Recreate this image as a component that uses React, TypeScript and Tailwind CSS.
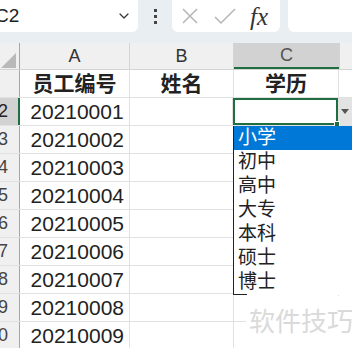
import { ChevronDown } from "lucide-react";

const ids = ["20210001", "20210002", "20210003", "20210004", "20210005", "20210006", "20210007", "20210008", "20210009"];
const options = ["小学", "初中", "高中", "大专", "本科", "硕士", "博士"];

const App = () => {
  return (
    <div
      className="relative w-[352px] h-[348px] overflow-hidden bg-white text-[#222]"
      style={{ fontFamily: '"Liberation Sans", "Noto Sans CJK SC", sans-serif' }}
    >
      {/* Formula bar */}
      <div className="h-[43px] bg-[#e9eef3] flex items-start">
        <div className="w-[138px] h-[32px] bg-white rounded-br-[6px] flex items-center justify-between pr-[6px]">
          <span className="-ml-[5px] text-[19px] text-[#222]">C2</span>
          <ChevronDown className="w-[16px] h-[16px] text-[#333]" strokeWidth={1.8} />
        </div>
        <div className="w-[34px] h-[32px] flex flex-col items-center justify-center gap-[3px]">
          <span className="w-[3px] h-[3px] bg-[#444]" />
          <span className="w-[3px] h-[3px] bg-[#444]" />
          <span className="w-[3px] h-[3px] bg-[#444]" />
        </div>
        <div className="w-[108px] h-[32px] bg-white rounded-b-[6px] flex items-center px-[8px] gap-[13px]">
          <svg width="20" height="20" viewBox="0 0 20 20" className="text-[#b5b5b5]">
            <path d="M3 3 L17 17 M17 3 L3 17" stroke="currentColor" strokeWidth="1.5" fill="none" />
          </svg>
          <svg width="24" height="20" viewBox="0 0 24 20" className="text-[#b5b5b5]">
            <path d="M2 11 L8 17 L22 3" stroke="currentColor" strokeWidth="1.5" fill="none" />
          </svg>
          <span className="text-[25px] leading-none italic text-[#333]" style={{ fontFamily: '"Liberation Serif", serif' }}>
            fx
          </span>
        </div>
        <div className="ml-[8px] flex-1 h-[32px] bg-white rounded-bl-[6px]" />
      </div>

      {/* Column header row */}
      <div className="flex h-[27px] bg-[#f0f0f0] border-b border-[#d4d4d4] text-[18px] text-[#333]">
        <div className="w-[20px] h-full border-r border-[#a8a8a8] flex items-end">
          <svg width="19" height="22" viewBox="0 0 19 22">
            <path d="M1 21 L16 21 L16 6 Z" fill="#b9b9b9" />
          </svg>
        </div>
        <div className="w-[110px] h-full border-r border-[#d4d4d4] flex items-center justify-center">A</div>
        <div className="w-[104px] h-full border-r border-[#d4d4d4] flex items-center justify-center">B</div>
        <div className="w-[105px] h-full bg-[#d2d2d2] border-b-2 border-[#1e6e42] flex items-center justify-center text-[#555]">C</div>
        <div className="flex-1 h-full border-l border-[#d4d4d4]" />
      </div>

      {/* Header data row */}
      <div className="flex h-[28px] border-b border-[#e1e1e1]">
        <div className="w-[20px] h-full bg-[#f0f0f0] border-r border-[#a8a8a8]" />
        <div className="w-[110px] h-full border-r border-[#e1e1e1] flex items-center justify-center text-[21px] font-bold">员工编号</div>
        <div className="w-[104px] h-full border-r border-[#e1e1e1] flex items-center justify-center text-[21px] font-bold">姓名</div>
        <div className="w-[105px] h-full border-r border-[#e1e1e1] flex items-center justify-center text-[21px] font-bold">学历</div>
        <div className="flex-1 h-full" />
      </div>

      {/* Data rows */}
      {ids.map((id, i) => {
        const selected = i === 0;
        return (
          <div key={id} className="flex h-[28px] border-b border-[#e1e1e1]">
            <div
              className={
                selected
                  ? "w-[20px] h-full bg-[#d2d2d2] border-r-2 border-[#1e6e42] flex items-center justify-end pr-[10px] text-[18px] text-[#222]"
                  : "w-[20px] h-full bg-[#f0f0f0] border-r border-[#a8a8a8] flex items-center justify-end pr-[11px] text-[18px] text-[#444]"
              }
            >
              {i + 2}
            </div>
            <div className="w-[110px] h-full border-r border-[#e1e1e1] flex items-center justify-end pr-[5px] text-[21px]">{id}</div>
            <div className="w-[104px] h-full border-r border-[#e1e1e1]" />
            <div className={selected ? "relative w-[105px] h-full border-2 border-[#1e6e42]" : "w-[105px] h-full border-r border-[#e1e1e1]"}>
              {selected && <span className="absolute -right-[4px] -bottom-[4px] w-[6px] h-[6px] bg-[#1e6e42] border border-white" />}
            </div>
            <div className="flex-1 h-full">
              {selected && (
                <div className="h-full w-[14px] bg-[#e3e3e3] flex items-center justify-center">
                  <span className="w-0 h-0 border-l-[4px] border-r-[4px] border-t-[5px] border-l-transparent border-r-transparent border-t-[#555]" />
                </div>
              )}
            </div>
          </div>
        );
      })}

      {/* Validation list */}
      <div className="absolute left-[233px] top-[126px] w-[130px] h-[169px] bg-white border-l border-[#222]">
        {options.map((o, i) => (
          <div
            key={o}
            className={
              i === 0
                ? "h-[24px] bg-[#0078d7] text-white flex items-center pl-[4px] text-[19px]"
                : "h-[24px] text-[#222] flex items-center pl-[4px] text-[19px]"
            }
          >
            {o}
          </div>
        ))}
        <div className="h-px w-[13px] bg-[#222]" />
      </div>

      {/* Watermark */}
      <div className="absolute left-[246px] top-[296px] w-[110px] h-[52px] bg-white flex items-center pl-[3px] text-[26px] text-[#dadada] whitespace-nowrap">
        软件技巧
      </div>
    </div>
  );
};

export default App;
